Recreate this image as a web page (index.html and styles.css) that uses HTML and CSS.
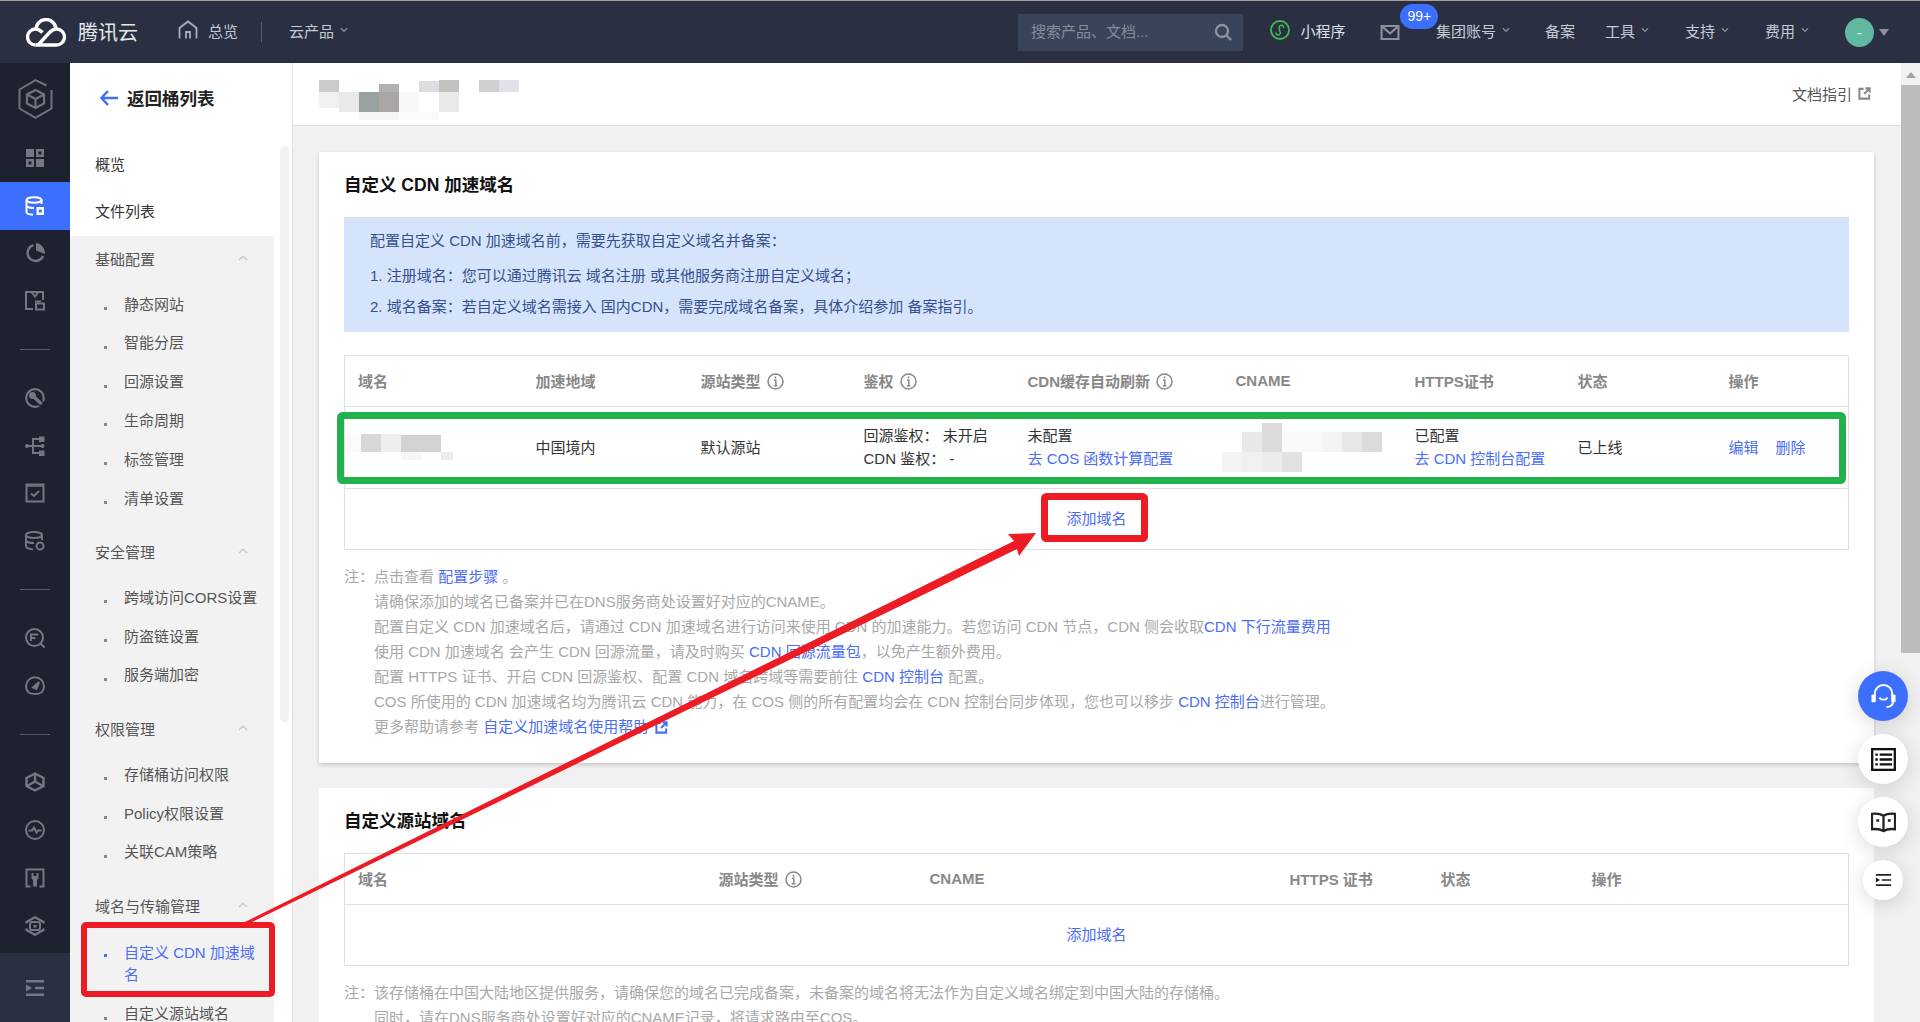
FILE: index.html
```html
<!DOCTYPE html>
<html lang="zh-CN">
<head>
    <meta charset="UTF-8">
    <meta name="viewport" content="width=device-width, initial-scale=1.0">
    <title>自定义 CDN 加速域名</title>
    <link rel="stylesheet" href="styles.css">
</head>
<body>
    <svg class="defs" width="0" height="0">
        <symbol id="chev" viewBox="0 0 8 6"><path d="M1 1.2 4 4.4 7 1.2" fill="none" stroke="currentColor" stroke-width="1.3"/></symbol>
        <symbol id="chev-up" viewBox="0 0 10 6"><path d="M1 5 5 1.2 9 5" fill="none" stroke="currentColor" stroke-width="1.5"/></symbol>
        <symbol id="info" viewBox="0 0 17 17"><circle cx="8.5" cy="8.5" r="7.5" fill="none" stroke="currentColor" stroke-width="1.5"/><path d="M8.5 3.6v1.8M7 7.3H8.8V12.8M6.8 12.8H10.4" fill="none" stroke="currentColor" stroke-width="1.5"/></symbol>
        <symbol id="ext" viewBox="0 0 14 14"><path d="M6 2H1.5V12.5H12V8M8 1.5H12.5V6M12 2 6.5 7.5" fill="none" stroke="currentColor" stroke-width="2.2"/></symbol>
    </svg>

    <header class="topbar">
        <div class="brand">
            <svg class="brand-logo" viewBox="0 0 40 29" fill="none" stroke="#fff" stroke-width="3.4">
                <path d="M9.5 27H30.5A8 8 0 0 0 30.5 11C27.5 11 25.5 12.5 23.5 14.5L12.5 26.5"/>
                <path d="M9.5 27A8 8 0 0 1 9.5 11C12.5 11 14.5 12.5 16.5 14.5"/>
                <path d="M10 11.5A10 10 0 0 1 30 11.5"/>
            </svg>
            <span class="brand-name">腾讯云</span>
        </div>
        <a class="top-link home">
            <svg class="home-icon" viewBox="0 0 20 20" fill="none" stroke="#a9aeb9" stroke-width="1.8"><path d="M1.5 18.5V8L10 1.5 18.5 8V18.5M8 18.5V12H12V18.5"/></svg>
            总览
        </a>
        <span class="top-divider"></span>
        <a class="top-link">云产品 <svg class="chev"><use href="#chev"/></svg></a>

        <div class="top-right">
            <div class="search">
                <span>搜索产品、文档...</span>
                <svg class="search-icon" viewBox="0 0 18 18" fill="none" stroke="#8d929c" stroke-width="2.4"><circle cx="8" cy="8" r="6"/><path d="M12.5 12.5 17 17"/></svg>
            </div>
            <a class="top-link mini">
                <svg class="mini-icon" viewBox="0 0 20 20" fill="none" stroke="#3fb950" stroke-width="1.8"><circle cx="10" cy="10" r="9"/><path d="M6 12.5A2.2 2.2 0 1 0 9.5 11V8.5A2.2 2.2 0 1 1 13.5 8" stroke-width="1.5"/></svg>
                小程序
            </a>
            <div class="mail">
                <svg class="mail-icon" viewBox="0 0 20 16" fill="none" stroke="#8d929c" stroke-width="2.2"><rect x="1" y="1" width="18" height="14"/><path d="M2 2 10 9 18 2"/></svg>
                <span class="badge">99+</span>
            </div>
            <a class="top-link group-link">集团账号 <svg class="chev"><use href="#chev"/></svg></a>
            <a class="top-link beian">备案</a>
            <a class="top-link tools">工具 <svg class="chev"><use href="#chev"/></svg></a>
            <a class="top-link support">支持 <svg class="chev"><use href="#chev"/></svg></a>
            <a class="top-link fees">费用 <svg class="chev"><use href="#chev"/></svg></a>
            <span class="avatar">-</span>
            <span class="avatar-caret"></span>
        </div>
    </header>

    <div class="layout">
        <nav class="rail">
            <div class="rail-logo">
                <svg viewBox="0 0 35 40" fill="none" stroke="#6e737d" stroke-width="2">
                    <path d="M28.5 6.5 17.5 1.2 1.5 10.5V29.5L17.5 38.8 33.5 29.5V11"/>
                    <path d="M17.5 11 26 15.5V24.5L17.5 29 9 24.5V15.5ZM9 15.5 17.5 20 26 15.5M17.5 20V29" stroke-width="2.2"/>
                </svg>
            </div>
            <a class="rail-item"><svg viewBox="0 0 20 20" fill="#737882"><path d="M1 1H9V9H1ZM11 1H19V9H11ZM1 11H9V19H1ZM11 11H19V19H11ZM13.5 3.5V6.5H16.5V3.5ZM3.5 13.5V16.5H6.5V13.5Z" fill-rule="evenodd"/></svg></a>
            <a class="rail-item active"><svg viewBox="0 0 20 20" fill="none" stroke="#fff" stroke-width="2"><ellipse cx="9" cy="4" rx="7.5" ry="2.8"/><path d="M1.5 4V16C1.5 17.5 4 18.5 8 18.8M16.5 4V8M1.5 10C3 11.5 6 12 9 12"/><rect x="11.5" y="11" width="7.5" height="8" fill="#fff" stroke="none"/><rect x="13.8" y="13.5" width="2.9" height="3" fill="#3d6fff" stroke="none"/></svg></a>
            <a class="rail-item"><svg viewBox="0 0 20 20" fill="none" stroke="#737882" stroke-width="2.4"><path d="M8.5 2.2A8 8 0 1 0 18 13"/><path d="M11 0C16 0.5 20 5 20 11L11 7.5Z" fill="#737882" stroke="none"/></svg></a>
            <a class="rail-item"><svg viewBox="0 0 20 20" fill="none" stroke="#737882" stroke-width="2"><path d="M8 18H1V1H18V9M6.5 1 10 5.5 13.5 1"/><rect x="11" y="12.5" width="8" height="6"/><path d="M10 10.5H16"/></svg></a>
            <div class="rail-sep"></div>
            <a class="rail-item"><svg viewBox="0 0 20 20" fill="none" stroke="#737882" stroke-width="2.2"><circle cx="10" cy="10" r="8.8"/><path d="M8 8 18 17.5" stroke="#1e2130" stroke-width="6.5"/><path d="M8.5 8.5 16.5 16" stroke-width="3.4"/><circle cx="7.5" cy="7.5" r="3.4" fill="#737882" stroke="none"/></svg></a>
            <a class="rail-item"><svg viewBox="0 0 20 20" fill="none" stroke="#737882" stroke-width="2"><circle cx="2" cy="10" r="2" fill="#737882" stroke="none"/><circle cx="17.5" cy="10" r="2" fill="#737882" stroke="none"/><path d="M2 10H17M8 10V3H14M8 10V17H14"/><rect x="14" y="0.5" width="5.5" height="5.5" fill="#737882" stroke="none"/><rect x="14" y="14.5" width="5.5" height="5.5" fill="#737882" stroke="none"/></svg></a>
            <a class="rail-item"><svg viewBox="0 0 20 20" fill="none" stroke="#737882" stroke-width="2"><path d="M1.5 1.5H18.5V18.5H1.5Z"/><path d="M1 3H19" stroke-width="1.5"/><path d="M6 10.5 9 13 14 8"/></svg></a>
            <a class="rail-item"><svg viewBox="0 0 20 20" fill="none" stroke="#737882" stroke-width="2"><ellipse cx="9" cy="4" rx="8" ry="3"/><path d="M1 4V15C1 17 4 18 8 18.5M17 4V9M1 10C3 12 6 12 9 12"/><circle cx="15" cy="15" r="3.5"/></svg></a>
            <div class="rail-sep"></div>
            <a class="rail-item"><svg viewBox="0 0 20 20" fill="none" stroke="#737882" stroke-width="2"><circle cx="9.5" cy="9.5" r="8.5"/><path d="M15.5 15.5 19.5 19.5M13 6.5H6V13M6 10H10.5"/></svg></a>
            <a class="rail-item"><svg viewBox="0 0 20 20" fill="none" stroke="#737882" stroke-width="2"><path d="M3.5 16.5A9 9 0 1 1 16.5 16.5"/><path d="M3.5 16.5C7 18.5 13 18.5 16.5 16.5"/><path d="M8 11.5 14 6 11.5 13Z" fill="#737882"/></svg></a>
            <div class="rail-sep"></div>
            <a class="rail-item"><svg viewBox="0 0 20 20" fill="none" stroke="#737882" stroke-width="2.4"><path d="M10 1.5 18.5 6V14L10 18.5 1.5 14V6Z"/><path d="M10 1.5V9.5L2 14M10 9.5 18 14"/></svg></a>
            <a class="rail-item"><svg viewBox="0 0 20 20" fill="none" stroke="#737882" stroke-width="2"><circle cx="10" cy="10" r="9"/><path d="M3.5 10.5H7L9 7.5 11.5 12.5 13 10.5H16.5"/></svg></a>
            <a class="rail-item"><svg viewBox="0 0 20 20" fill="none" stroke="#737882" stroke-width="2"><path d="M5.5 18.5H1.5V1.5H18.5V18.5H14.5"/><path d="M6.5 5H8.5V8H11.5V5H13.5V10.5L12 12V18.5H8V12L6.5 10.5Z" fill="#737882" stroke="none"/></svg></a>
            <a class="rail-item"><svg viewBox="0 0 20 20" fill="none" stroke="#737882" stroke-width="2.2"><path d="M1.5 7.5V6L10 1.2 18.5 6V7.5M1.5 12.5V14L10 18.8 18.5 14V12.5"/><rect x="5" y="6" width="10" height="8" rx="2" stroke-width="2"/><rect x="8.5" y="9" width="3" height="2.5" fill="#737882" stroke="none"/></svg></a>
            <a class="rail-foot"><svg viewBox="0 0 18 16" fill="#737882"><path d="M0 0H18V2.5H0ZM9 6.7H18V9.2H9ZM0 13.5H18V16H0ZM0 4.5 6 8 0 11.5Z"/></svg></a>
        </nav>

        <aside class="sidebar">
            <div class="back-row">
                <svg class="back-arrow" viewBox="0 0 18 16" fill="none" stroke="#3d6fff" stroke-width="2.4"><path d="M8 1 1.5 8 8 15M2 8H18"/></svg>
                <span>返回桶列表</span>
            </div>
            <div class="side-body">
                <div class="side-menu">
                    <div class="side-top">
                        <a class="top-item">概览</a>
                        <a class="top-item">文件列表</a>
                    </div>
                    <div class="side-groups">
                        <div class="menu-group">
                            <div class="group-title">基础配置<svg class="chev-up"><use href="#chev-up"/></svg></div>
                            <a class="menu-item">静态网站</a>
                            <a class="menu-item">智能分层</a>
                            <a class="menu-item">回源设置</a>
                            <a class="menu-item">生命周期</a>
                            <a class="menu-item">标签管理</a>
                            <a class="menu-item">清单设置</a>
                        </div>
                        <div class="menu-group">
                            <div class="group-title">安全管理<svg class="chev-up"><use href="#chev-up"/></svg></div>
                            <a class="menu-item">跨域访问CORS设置</a>
                            <a class="menu-item">防盗链设置</a>
                            <a class="menu-item">服务端加密</a>
                        </div>
                        <div class="menu-group">
                            <div class="group-title">权限管理<svg class="chev-up"><use href="#chev-up"/></svg></div>
                            <a class="menu-item">存储桶访问权限</a>
                            <a class="menu-item">Policy权限设置</a>
                            <a class="menu-item">关联CAM策略</a>
                        </div>
                        <div class="menu-group">
                            <div class="group-title">域名与传输管理<svg class="chev-up"><use href="#chev-up"/></svg></div>
                            <a class="menu-item current">自定义 CDN 加速域名</a>
                            <a class="menu-item">自定义源站域名</a>
                        </div>
                    </div>
                </div>
                <div class="side-track"></div>
            </div>
        </aside>

        <main class="main">
            <div class="page-head">
                <svg class="mosaic" width="200" height="41" viewBox="0 0 200 41">
                    <rect x="0" y="0" width="20" height="12" fill="#cbcbcd"/>
                    <rect x="60" y="4" width="20" height="8" fill="#b5b0b0"/>
                    <rect x="100" y="1" width="20" height="11" fill="#dddde0"/>
                    <rect x="120" y="0" width="20" height="12" fill="#c5c0c0"/>
                    <rect x="160" y="0" width="20" height="12" fill="#d0cfd4"/>
                    <rect x="180" y="0" width="20" height="12" fill="#e1e2e9"/>
                    <rect x="0" y="12" width="20" height="16" fill="#f0f0f0"/>
                    <rect x="20" y="12" width="20" height="20" fill="#e9e9e9"/>
                    <rect x="40" y="12" width="20" height="20" fill="#9aa1a1"/>
                    <rect x="60" y="12" width="20" height="20" fill="#aaa6a6"/>
                    <rect x="80" y="12" width="20" height="20" fill="#f8f8f8"/>
                    <rect x="120" y="12" width="20" height="20" fill="#e9e9e7"/>
                    <rect x="40" y="32" width="40" height="8" fill="#f5f5f5"/>
                    <rect x="80" y="32" width="40" height="8" fill="#fafafa"/>
                </svg>
                <a class="doc-link">文档指引 <svg class="ext-icon"><use href="#ext"/></svg></a>
            </div>

            <div class="content">
                <section class="card first-card">
                    <h2 class="card-title">自定义 CDN 加速域名</h2>
                    <div class="tip-box">
                        <p>配置自定义 CDN 加速域名前，需要先获取自定义域名并备案：</p>
                        <p>1. 注册域名：您可以通过腾讯云 域名注册 或其他服务商注册自定义域名；</p>
                        <p>2. 域名备案：若自定义域名需接入 国内CDN，需要完成域名备案，具体介绍参加 备案指引。</p>
                    </div>

                    <table class="domain-table cdn-table">
                        <colgroup>
                            <col class="c1"><col class="c2"><col class="c3"><col class="c4"><col class="c5"><col class="c6"><col class="c7"><col class="c8"><col>
                        </colgroup>
                        <thead>
                            <tr>
                                <th>域名</th>
                                <th>加速地域</th>
                                <th>源站类型 <svg class="info"><use href="#info"/></svg></th>
                                <th>鉴权 <svg class="info"><use href="#info"/></svg></th>
                                <th>CDN缓存自动刷新 <svg class="info"><use href="#info"/></svg></th>
                                <th>CNAME</th>
                                <th>HTTPS证书</th>
                                <th>状态</th>
                                <th>操作</th>
                            </tr>
                        </thead>
                        <tbody>
                            <tr class="data-row">
                                <td class="blur-cell">
                                    <svg class="mosaic" width="110" height="28" viewBox="0 0 110 28">
                                        <rect x="0" y="0" width="16" height="18" fill="#fafafa"/>
                                        <rect x="16" y="0" width="20" height="18" fill="#d7d7d7"/>
                                        <rect x="36" y="0" width="20" height="18" fill="#eeeeee"/>
                                        <rect x="56" y="1" width="40" height="17" fill="#d2d2d2"/>
                                        <rect x="56" y="18" width="20" height="8" fill="#f6f6f6"/>
                                        <rect x="96" y="18" width="12" height="8" fill="#ececec"/>
                                    </svg>
                                </td>
                                <td>中国境内</td>
                                <td>默认源站</td>
                                <td><div class="cell-line">回源鉴权：&nbsp;未开启</div><div class="cell-line">CDN 鉴权：&nbsp;-</div></td>
                                <td><div class="cell-line">未配置</div><div class="cell-line"><a>去 COS 函数计算配置</a></div></td>
                                <td class="blur-cell">
                                    <svg class="mosaic" width="160" height="50" viewBox="0 0 160 50">
                                        <rect x="20" y="9" width="20" height="20" fill="#e8e8e9"/>
                                        <rect x="40" y="0" width="20" height="29" fill="#dcdada"/>
                                        <rect x="60" y="9" width="40" height="20" fill="#f9f9f9"/>
                                        <rect x="100" y="9" width="20" height="20" fill="#f4f4f4"/>
                                        <rect x="120" y="9" width="20" height="20" fill="#e8e8e8"/>
                                        <rect x="140" y="9" width="20" height="20" fill="#dcdbdb"/>
                                        <rect x="0" y="29" width="20" height="20" fill="#f4f4f4"/>
                                        <rect x="20" y="29" width="20" height="20" fill="#f0f0f0"/>
                                        <rect x="40" y="29" width="20" height="20" fill="#ececec"/>
                                        <rect x="60" y="29" width="20" height="20" fill="#e2e2e2"/>
                                    </svg>
                                </td>
                                <td><div class="cell-line">已配置</div><div class="cell-line"><a>去 CDN 控制台配置</a></div></td>
                                <td>已上线</td>
                                <td class="ops"><a>编辑</a><a>删除</a></td>
                            </tr>
                            <tr class="add-row"><td colspan="9"><a>添加域名</a></td></tr>
                        </tbody>
                    </table>

                    <div class="notes">
                        <p>注：点击查看 <a>配置步骤</a> 。</p>
                        <p>请确保添加的域名已备案并已在DNS服务商处设置好对应的CNAME。</p>
                        <p>配置自定义 CDN 加速域名后，请通过 CDN 加速域名进行访问来使用 CDN 的加速能力。若您访问 CDN 节点，CDN 侧会收取<a>CDN 下行流量费用</a></p>
                        <p>使用 CDN 加速域名 会产生 CDN 回源流量，请及时购买 <a>CDN 回源流量包</a>，以免产生额外费用。</p>
                        <p>配置 HTTPS 证书、开启 CDN 回源鉴权、配置 CDN 域名跨域等需要前往 <a>CDN 控制台</a> 配置。</p>
                        <p>COS 所使用的 CDN 加速域名均为腾讯云 CDN 能力，在 COS 侧的所有配置均会在 CDN 控制台同步体现，您也可以移步 <a>CDN 控制台</a>进行管理。</p>
                        <p>更多帮助请参考 <a>自定义加速域名使用帮助</a> <svg class="ext-link"><use href="#ext"/></svg></p>
                    </div>
                </section>

                <section class="card second-card">
                    <h2 class="card-title">自定义源站域名</h2>
                    <table class="domain-table origin-table">
                        <colgroup>
                            <col class="o1"><col class="o2"><col class="o3"><col class="o4"><col class="o5"><col>
                        </colgroup>
                        <thead>
                            <tr>
                                <th>域名</th>
                                <th>源站类型 <svg class="info"><use href="#info"/></svg></th>
                                <th>CNAME</th>
                                <th>HTTPS 证书</th>
                                <th>状态</th>
                                <th>操作</th>
                            </tr>
                        </thead>
                        <tbody>
                            <tr class="add-row"><td colspan="6"><a>添加域名</a></td></tr>
                        </tbody>
                    </table>
                    <div class="notes">
                        <p>注：该存储桶在中国大陆地区提供服务，请确保您的域名已完成备案，未备案的域名将无法作为自定义域名绑定到中国大陆的存储桶。</p>
                        <p>同时，请在DNS服务商处设置好对应的CNAME记录，将请求路由至COS。</p>
                    </div>
                </section>
            </div>
        </main>

        <div class="page-scroll">
            <span class="scroll-up"></span>
            <span class="scroll-thumb"></span>
        </div>
    </div>

    <div class="float-tools">
        <a class="float-btn service">
            <svg viewBox="0 0 28 28" fill="none" stroke="#fff" stroke-width="2"><path d="M5 13V11A9 9 0 0 1 23 11V13M10 15C11 18 17 18 18 15M24 19C24 23 21 25 17 25"/><rect x="1.5" y="12" width="4.5" height="8" rx="1" fill="#fff" stroke="none"/><rect x="22" y="12" width="4.5" height="8" rx="1" fill="#fff" stroke="none"/></svg>
        </a>
        <a class="float-btn">
            <svg viewBox="0 0 26 24" fill="none" stroke="#111" stroke-width="2.4"><rect x="1.2" y="1.2" width="23.6" height="21.6"/><path d="M9 7H22M9 12H22M9 17H22M4.5 7H7M4.5 12H7M4.5 17H7"/></svg>
        </a>
        <a class="float-btn">
            <svg viewBox="0 0 26 22" fill="none" stroke="#222" stroke-width="2.4"><path d="M13 4C10 2 5 1.5 1 2V18C5 17.5 10 18 13 20 16 18 21 17.5 25 18V2C21 1.5 16 2 13 4ZM13 4V20"/><path d="M5.5 9H8.5M17.5 9H20.5" stroke-width="2.6"/></svg>
        </a>
        <a class="float-btn small">
            <svg viewBox="0 0 20 16" fill="#222"><path d="M1 1H19V3H1ZM8 7H19V9H8ZM1 13H19V15H1ZM1 5 6 8 1 11Z"/></svg>
        </a>
    </div>

    <!-- 截图上的标注 -->
    <svg class="marks" width="1920" height="1022" viewBox="0 0 1920 1022">
        <rect x="340.5" y="415.5" width="1502" height="65" rx="2" fill="none" stroke="#22b14c" stroke-width="7"/>
        <rect x="1044.5" y="496.5" width="100" height="42" rx="2" fill="none" stroke="#ed1c24" stroke-width="7"/>
        <rect x="84" y="925" width="188" height="69" rx="2" fill="none" stroke="#ed1c24" stroke-width="6"/>
        <path d="M244 922.5 1014 541 1008 534 1036 533 1019 556 1017 549 246 925Z" fill="#ed1c24"/>
    </svg>
</body>
</html>
```

FILE: styles.css
```css
* {
    box-sizing: border-box;
}

html, body {
    height: 100%;
}

body {
    margin: 0;
    display: flex;
    flex-direction: column;
    overflow: hidden;
    font-family: "Liberation Sans", "Noto Sans CJK SC", sans-serif;
    font-size: 15px;
    color: #333;
    background-color: #f1f1f1;
}

a {
    color: inherit;
    text-decoration: none;
}

p {
    margin: 0;
}

svg {
    display: block;
}

.defs {
    position: absolute;
}

/* 顶部导航 */
.topbar {
    flex: none;
    height: 63px;
    display: flex;
    align-items: center;
    color: #c6cad3;
    background-color: #2a3042;
    border-top: 1px solid #a89f9a;
}

.brand {
    display: flex;
    align-items: center;
    margin-left: 26px;
}

.brand-logo {
    width: 40px;
    height: 29px;
}

.brand-name {
    margin-left: 12px;
    padding-bottom: 2px;
    font-size: 20px;
    color: #e6e8ec;
}

.top-link {
    display: flex;
    align-items: center;
    gap: 6px;
    padding-bottom: 4px;
    white-space: nowrap;
}

.home {
    margin-left: 40px;
    gap: 10px;
}

.home-icon {
    width: 20px;
    height: 20px;
}

.top-divider {
    width: 1px;
    height: 20px;
    margin: 0 27px 0 23px;
    background-color: #5b6070;
}

.chev {
    width: 8px;
    height: 6px;
    color: #8d929c;
}

.top-right {
    margin-left: auto;
    display: flex;
    align-items: center;
    padding-right: 31px;
}

.search {
    width: 225px;
    height: 37px;
    display: flex;
    align-items: center;
    justify-content: space-between;
    padding: 0 11px 3px 13px;
    color: #868c99;
    background-color: #39435a;
}

.search-icon {
    width: 18px;
    height: 18px;
    margin-top: 3px;
}

.mini {
    margin-left: 27.5px;
    gap: 10px;
    color: #dfe1e6;
}

.mini-icon {
    width: 20px;
    height: 20px;
}

.mail {
    position: relative;
    margin-left: 35px;
}

.mail-icon {
    width: 20px;
    height: 15px;
}

.badge {
    position: absolute;
    left: 20px;
    top: -21px;
    width: 38px;
    height: 25px;
    line-height: 24px;
    border-radius: 13px;
    text-align: center;
    font-size: 14px;
    color: #fff;
    background-color: #3d6fff;
}

.group-link {
    margin-left: 35.5px;
}

.beian {
    margin-left: 35px;
}

.tools {
    margin-left: 30px;
}

.support {
    margin-left: 36px;
}

.fees {
    margin-left: 36px;
}

.avatar {
    width: 29px;
    height: 29px;
    margin-left: 36px;
    border-radius: 50%;
    line-height: 29px;
    text-align: center;
    color: #fff;
    background-color: #5fb89f;
}

.avatar-caret {
    margin-left: 5px;
    border-left: 5px solid transparent;
    border-right: 5px solid transparent;
    border-top: 7px solid #8d929c;
}

/* 主体 */
.layout {
    flex: 1;
    min-height: 0;
    display: flex;
}

.rail {
    flex: none;
    width: 70px;
    display: flex;
    flex-direction: column;
    background-color: #1e2130;
}

.rail-logo {
    height: 71px;
    flex: none;
    display: flex;
    align-items: center;
    justify-content: center;
}

.rail-logo svg {
    width: 35px;
    height: 40px;
}

.rail-item {
    flex: none;
    height: 47.75px;
    display: flex;
    align-items: center;
    justify-content: center;
}

.rail-item svg {
    width: 20px;
    height: 20px;
}

.rail-item.active {
    background-color: #3d6fff;
}

.rail-sep {
    flex: none;
    height: 49px;
    display: flex;
    align-items: center;
    justify-content: center;
}

.rail-sep::before {
    content: "";
    width: 30px;
    height: 1px;
    background-color: #565a66;
}

.rail-foot {
    margin-top: auto;
    height: 69px;
    display: flex;
    align-items: center;
    justify-content: center;
    background-color: #2a3042;
}

.rail-foot svg {
    width: 18px;
    height: 16px;
}

.sidebar {
    flex: none;
    width: 223px;
    background-color: #fff;
    border-right: 1px solid #e2e2e2;
}

.back-row {
    height: 71px;
    display: flex;
    align-items: center;
    padding: 0 0 2px 30px;
    font-size: 17.5px;
    font-weight: bold;
    color: #222;
}

.back-arrow {
    width: 18px;
    height: 16px;
    margin-right: 9px;
}

.side-body {
    display: flex;
}

.side-menu {
    width: 204px;
}

.side-top {
    padding: 7px 0 1px;
}

.top-item {
    display: block;
    height: 47px;
    line-height: 47px;
    padding-left: 25px;
}

.side-groups {
    background-color: #f2f2f2;
    height: 800px;
}

.menu-group {
    padding-bottom: 11.5px;
}

.group-title {
    position: relative;
    height: 49px;
    line-height: 47px;
    padding-left: 25px;
    color: #555;
}

.chev-up {
    position: absolute;
    right: 26px;
    top: 19px;
    width: 10px;
    height: 6px;
    color: #c9c9c9;
}

.menu-item {
    position: relative;
    display: block;
    min-height: 38.8px;
    padding: 9.6px 12px 9.6px 54px;
    line-height: 19.5px;
    color: #555;
}

.menu-item::before {
    content: "";
    position: absolute;
    left: 34px;
    top: 22px;
    width: 3px;
    height: 3px;
    background-color: #888;
}

.menu-item.current {
    line-height: 22px;
    padding-bottom: 9px;
    color: #4a6cf7;
}

.menu-item.current::before {
    background-color: #3d6fff;
}

.side-track {
    width: 9px;
    height: 576px;
    margin: 12px 0 0 6px;
    border-radius: 5px;
    background-color: #f2f2f2;
}

.main {
    flex: 1;
    min-width: 0;
    overflow: hidden;
}

.page-head {
    height: 63px;
    display: flex;
    align-items: flex-start;
    justify-content: space-between;
    padding: 17px 30px 0 26px;
    background-color: #fff;
    border-bottom: 1px solid #dedede;
}

.doc-link {
    display: flex;
    align-items: center;
    gap: 6px;
    margin-top: 3px;
    color: #555;
}

.ext-icon {
    width: 13px;
    height: 13px;
    color: #888;
}

.content {
    padding: 26px 27px 0 26px;
}

.card {
    padding: 20px 25px 24px;
    background-color: #fff;
    box-shadow: 0 2px 4px rgba(0, 0, 0, 0.18);
}

.second-card {
    margin-top: 25px;
    box-shadow: none;
}

.card-title {
    margin: 0 0 19px;
    line-height: 26px;
    font-size: 17.5px;
    font-weight: bold;
    color: #111;
}

.tip-box {
    height: 115px;
    margin-bottom: 23px;
    padding: 8px 26px;
    color: #34508f;
    background-color: #d6e4fb;
}

.tip-box p {
    line-height: 31px;
}

.tip-box p:first-child {
    margin-bottom: 4px;
}

.domain-table {
    width: 100%;
    table-layout: fixed;
    border-collapse: collapse;
    border: 1px solid #e0e0e0;
}

.domain-table th {
    height: 51px;
    padding: 0 0 2px 14px;
    text-align: left;
    white-space: nowrap;
    color: #888;
    font-weight: bold;
    border-bottom: 1px solid #e0e0e0;
}

.domain-table th:first-child {
    padding-left: 13px;
}

.domain-table td {
    padding: 0 0 2px 14px;
    border-bottom: 1px solid #e0e0e0;
}

.domain-table td a {
    color: #4a6cf7;
}

.c1 { width: 177px; }
.c2 { width: 165px; }
.c3 { width: 163px; }
.c4 { width: 164px; }
.c5 { width: 208px; }
.c6 { width: 179px; }
.c7 { width: 163px; }
.c8 { width: 151px; }

.o1 { width: 360px; }
.o2 { width: 211px; }
.o3 { width: 360px; }
.o4 { width: 151px; }
.o5 { width: 151px; }

.info {
    display: inline-block;
    width: 17px;
    height: 17px;
    margin-left: 2px;
    vertical-align: -3px;
    color: #888;
}

.data-row {
    height: 82px;
}

.cell-line {
    line-height: 23px;
}

.domain-table .blur-cell {
    padding: 0;
}

.ops a {
    margin-right: 17px;
}

.add-row {
    height: 61px;
    text-align: center;
}

.domain-table .add-row td {
    padding: 0 0 3px;
    border-bottom: none;
}

.notes {
    margin-top: 14px;
    color: #a8a8a8;
}

.notes p {
    padding-left: 30px;
    text-indent: -30px;
    line-height: 25px;
}

.notes p:not(:first-child) {
    text-indent: 0;
}

.notes a {
    color: #4a6cf7;
}

.ext-link {
    display: inline-block;
    width: 13px;
    height: 13px;
    margin-left: 3px;
    vertical-align: -2px;
    color: #3d6fff;
}

.page-scroll {
    position: relative;
    flex: none;
    width: 19px;
    background-color: #f1f1f1;
}

.scroll-up {
    position: absolute;
    left: 5px;
    top: 9px;
    border-left: 5px solid transparent;
    border-right: 5px solid transparent;
    border-bottom: 6px solid #a3a3a3;
}

.scroll-thumb {
    position: absolute;
    left: 0;
    right: 0;
    top: 22px;
    height: 568px;
    background-color: #bcbcbc;
}

/* 右下角悬浮按钮 */
.float-tools {
    position: fixed;
    left: 1858px;
    top: 671px;
    width: 50px;
    display: flex;
    flex-direction: column;
    align-items: center;
    gap: 13px;
}

.float-btn {
    width: 50px;
    height: 50px;
    display: flex;
    align-items: center;
    justify-content: center;
    border-radius: 50%;
    background-color: #fff;
    box-shadow: 0 4px 20px rgba(0, 0, 0, 0.15);
}

.float-btn svg {
    width: 25px;
    height: 23px;
}

.float-btn.service {
    background-color: #3d6fff;
}

.float-btn.service svg {
    width: 27px;
    height: 27px;
}

.float-btn.small {
    width: 40px;
    height: 40px;
}

.float-btn.small svg {
    width: 17px;
    height: 14px;
}

.marks {
    position: fixed;
    left: 0;
    top: 0;
    pointer-events: none;
}
```
